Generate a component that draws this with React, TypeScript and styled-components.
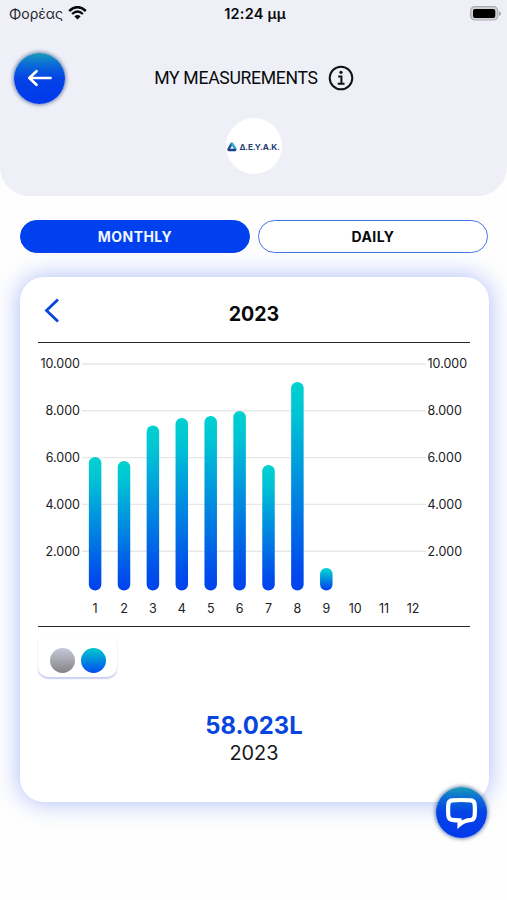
import React from "react";
import styled, { createGlobalStyle } from "styled-components";

const Global = createGlobalStyle`
  *{box-sizing:border-box}
  body{margin:0;background:#fff;font-family:Inter,"Liberation Sans",sans-serif;color:#08090c}
  button{font:inherit;color:inherit;border:0;padding:0;background:none}
  svg{display:block}
`;

const Screen = styled.main`
  position: relative;
  height: 900px;
  overflow: hidden;
  background: #fefefe;
`;
const Header = styled.header`
  height: 196px;
  background: #eff0f7;
  border-radius: 0 0 29px 29px;
`;
const StatusBar = styled.div`
  height: 28px;
  padding: 0 6px 2px 9px;
  display: grid;
  grid-template-columns: 1fr auto 1fr;
  align-items: center;
`;
const Carrier = styled.div`
  display: flex;
  align-items: center;
  gap: 5px;
  font-size: 14px;
  color: #26272b;
`;
const Clock = styled.div`
  font-size: 14.5px;
  font-weight: 600;
  letter-spacing: 0.25px;
`;
const Battery = styled.svg`
  justify-self: end;
`;
const TitleBar = styled.div`
  height: 54px;
  margin-top: 23px;
  padding: 0 13px;
  display: grid;
  grid-template-columns: 54px 1fr 54px;
  align-items: center;
`;
const RoundButton = styled.button`
  width: 51px;
  height: 51px;
  border-radius: 50%;
  display: grid;
  place-items: center;
  background: linear-gradient(180deg, #1b9cb6 0%, #0a6cd6 22%, #0542e6 50%, #0039ec 100%);
  box-shadow: 0 0 4px 0.5px rgba(30, 60, 120, 0.75);
`;
const BackButton = styled(RoundButton)`
  margin-left: 1px;
`;
const ChatButton = styled(RoundButton)`
  position: absolute;
  left: 436px;
  top: 787px;
`;
const Title = styled.h1`
  margin: 0 0 0 1px;
  display: flex;
  align-items: center;
  justify-content: center;
  gap: 10px;
  font: 400 17.6px Roboto, sans-serif;
  letter-spacing: -0.3px;
`;
const Logo = styled.div`
  width: 56px;
  height: 56px;
  margin: 13px auto 0;
  padding-top: 2px;
  border-radius: 50%;
  background: #fff;
  display: flex;
  align-items: center;
  justify-content: center;
  gap: 2px;
  font-size: 8.2px;
  font-weight: 700;
  letter-spacing: -0.15px;
  color: #253f70;
`;
const Tabs = styled.nav`
  margin: 24px 19px 0 20px;
  display: grid;
  grid-template-columns: 1fr 1fr;
  gap: 8px;
`;
const Tab = styled.button<{ $active?: boolean }>`
  height: 33px;
  border-radius: 17px;
  border: 1.5px solid ${(p) => (p.$active ? "#0040ee" : "#4575e6")};
  background: ${(p) => (p.$active ? "#0040ee" : "#fff")};
  color: ${(p) => (p.$active ? "#f2f6ff" : "#08090c")};
  font-size: 14px;
  font-weight: 700;
  letter-spacing: 0.45px;
`;
const Card = styled.section`
  height: 525px;
  margin: 24px 18px 0 20px;
  padding: 0 19px 0 18px;
  border-radius: 24px;
  background: #fff;
  box-shadow: 0 0 25px rgba(50, 90, 240, 0.42);
`;
const YearBar = styled.div`
  height: 66px;
  display: grid;
  grid-template-columns: 30px 1fr 30px;
  align-items: center;
  border-bottom: 1.5px solid #27282b;
`;
const Year = styled.h2`
  margin: 9px 0 0;
  text-align: center;
  font-size: 19.6px;
  font-weight: 700;
`;
const PreviousButton = styled.button`
  padding: 1px 0 0 6px;
`;
const ChartArea = styled.div`
  height: 284px;
  border-bottom: 1.5px solid #27282b;
`;
const ChartText = styled.text`
  font-size: 12.5px;
  fill: #202023;
`;
const Legend = styled.div`
  width: 79px;
  height: 38px;
  margin-top: 12px;
  padding: 5px 0 0;
  border-radius: 4px 4px 10px 10px;
  display: flex;
  align-items: center;
  justify-content: center;
  gap: 6px;
  box-shadow: 0 1.5px 1.5px #cbcdef, 0 0 1px #e8e8f5;
`;
const LegendDot = styled.span<{ $muted?: boolean }>`
  width: 25px;
  height: 25px;
  border-radius: 50%;
  background: ${(p) => (p.$muted ? "linear-gradient(#c6c8d8, #848484)" : "linear-gradient(#00cacd, #004bf0)")};
`;
const Summary = styled.div`
  margin-top: 34px;
  text-align: center;
  color: #151619;
`;
const Total = styled.div`
  font-size: 23.8px;
  line-height: 29px;
  font-weight: 700;
  color: #0845df;
`;
const Period = styled.div`
  font-size: 19.9px;
  line-height: 27px;
`;

const bars = [457, 461, 425.5, 418, 416, 411, 465, 382, 568];
const scale = ["10.000", "8.000", "6.000", "4.000", "2.000"];
const TOP = 343;
const LEFT = 38;

function Chart() {
  return (
    <svg width="432" height="282" role="img" aria-label="Monthly consumption">
      <defs>
        <linearGradient id="bar" x1="0" y1="0" x2="0" y2="1">
          <stop offset="0" stopColor="#00d1cf" />
          <stop offset=".15" stopColor="#00c4d5" />
          <stop offset=".9" stopColor="#004cec" />
          <stop offset="1" stopColor="#0042ee" />
        </linearGradient>
      </defs>
      {scale.map((label, i) => {
        const y = 364 - TOP + i * 46.8;
        return (
          <g key={label}>
            <path d={`M44 ${y}H388`} stroke="#e7e7e8" strokeWidth="1.4" />
            <ChartText x="42" y={y + 4.4} textAnchor="end">{label}</ChartText>
            <ChartText x="389.5" y={y + 4.4}>{label}</ChartText>
          </g>
        );
      })}
      {bars.map((top, i) => (
        <rect key={i} x={95.1 - LEFT - 6.25 + i * 28.9} y={top - TOP} width="12.5" height={590.5 - top} rx="6.25" fill="url(#bar)" />
      ))}
      {Array.from({ length: 12 }, (_, i) => (
        <ChartText key={i} x={95.1 - LEFT + i * 28.9} y={612.5 - TOP} textAnchor="middle">{i + 1}</ChartText>
      ))}
    </svg>
  );
}

export default function App() {
  return (
    <Screen>
      <Global />
      <Header>
        <StatusBar>
          <Carrier>
            Φορέας
            <svg width="19" height="14" viewBox="0 0 19 14" fill="none" stroke="#08090c">
              <path d="M1.2 5Q9.5-2.6 17.8 5" strokeWidth="2.6" />
              <path d="M4.1 8Q9.5 3 14.9 8" strokeWidth="2.3" />
              <path d="M6.4 10.4Q9.5 7.6 12.6 10.4L9.5 13.5Z" fill="#08090c" stroke="none" />
            </svg>
          </Carrier>
          <Clock>12:24 μμ</Clock>
          <Battery width="31" height="15" viewBox="0 0 31 15">
            <rect x=".7" y=".7" width="27" height="13.3" rx="4" fill="#d2d3d9" stroke="#aaabb0" strokeWidth="1.2" />
            <rect x="3" y="3" width="22.3" height="9" rx="2" fill="#000" />
            <path d="M29 5v5q2-1 2-2.5T29 5" fill="#a4a5aa" />
          </Battery>
        </StatusBar>
        <TitleBar>
          <BackButton aria-label="Back">
            <svg width="26" height="20" viewBox="0 0 26 20" fill="none" stroke="#fff" strokeWidth="2.7" strokeLinecap="round" strokeLinejoin="round">
              <path d="M23.5 10H2.5M9.5 3.2L2.3 10 9.5 16.8" />
            </svg>
          </BackButton>
          <Title>
            MY MEASUREMENTS
            <svg width="26" height="26" viewBox="0 0 26 26" fill="none" stroke="#101114" strokeWidth="2">
              <circle cx="13" cy="13" r="11.3" />
              <circle cx="13" cy="7.3" r="1.6" fill="#101114" stroke="none" />
              <path d="M10.2 11.6h3.2v7M9.7 18.7h6.8" />
            </svg>
          </Title>
        </TitleBar>
        <Logo>
          <svg width="10" height="10" viewBox="0 0 11 11" fill="none" strokeWidth="2.8" strokeLinejoin="round" strokeLinecap="round">
            <path d="M5 2L1.8 7.8" stroke="#24588f" />
            <path d="M5.8 2L9.2 7.8" stroke="#28aadc" />
            <path d="M2 8.9H8.8" stroke="#174586" />
          </svg>
          Δ.Ε.Υ.Α.Κ.
        </Logo>
      </Header>
      <Tabs>
        <Tab $active>MONTHLY</Tab>
        <Tab>DAILY</Tab>
      </Tabs>
      <Card>
        <YearBar>
          <PreviousButton aria-label="Previous year">
            <svg width="16" height="25" viewBox="0 0 16 25" fill="none" stroke="#0845df" strokeWidth="2.8">
              <path d="M14 1.5L2.5 12.5 14 23.5" />
            </svg>
          </PreviousButton>
          <Year>2023</Year>
        </YearBar>
        <ChartArea><Chart /></ChartArea>
        <Legend><LegendDot $muted /><LegendDot /></Legend>
        <Summary>
          <Total>58.023L</Total>
          <Period>2023</Period>
        </Summary>
      </Card>
      <ChatButton aria-label="Open chat">
        <svg width="33" height="32" viewBox="0 0 33 32" fill="none" stroke="#fff" strokeWidth="4.2" strokeLinejoin="miter">
          <path d="M7 3.4Q16.5 2.6 26 3.4Q29.2 3.8 29.6 7Q30.2 13 29.6 19Q29.2 22.4 26 22.9Q19 23.6 14.5 27.5V23.4Q10.5 23.4 7 22.9Q3.8 22.4 3.4 19Q2.8 13 3.4 7Q3.8 3.8 7 3.4Z" />
        </svg>
      </ChatButton>
    </Screen>
  );
}
